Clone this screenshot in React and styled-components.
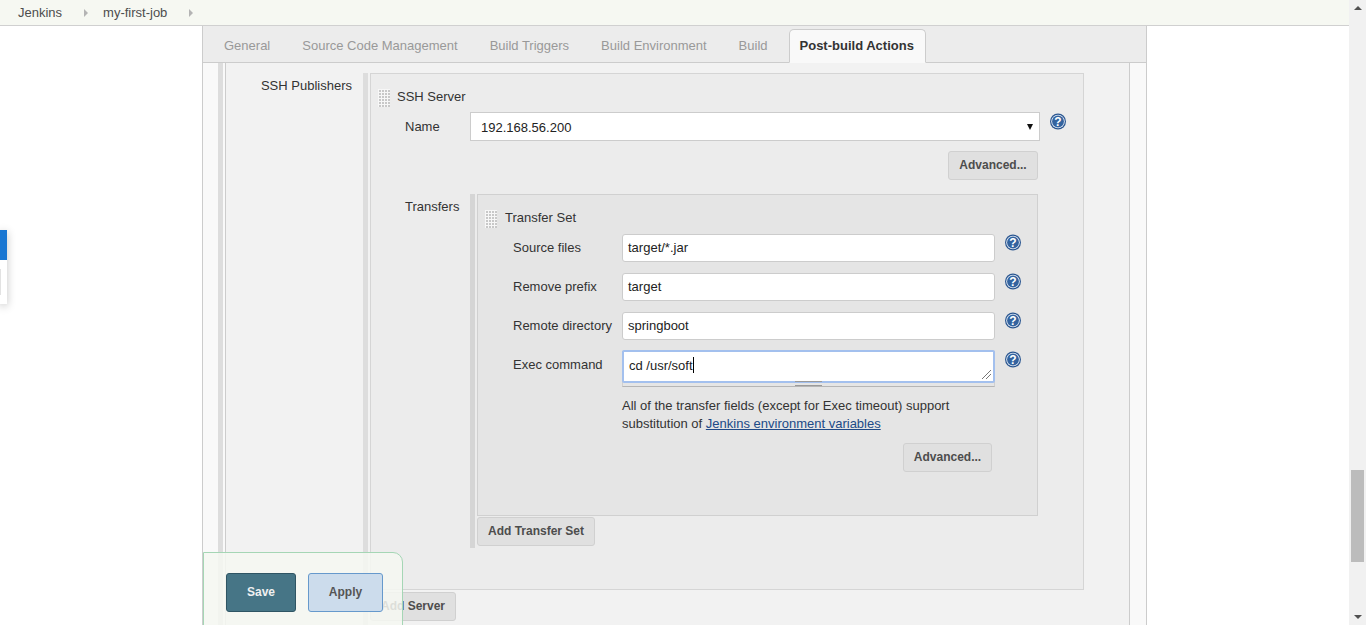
import React from "react";
import styled, { createGlobalStyle } from "styled-components";

const GlobalStyle = createGlobalStyle`
  html, body {
    margin: 0;
    padding: 0;
    height: 100%;
    overflow: hidden;
    background: #fff;
  }
  body {
    font-family: "Liberation Sans", Arial, Helvetica, sans-serif;
    font-size: 13px;
    color: #333;
  }
`;

const Viewport = styled.div`
  position: relative;
  display: flex;
  width: 1366px;
  height: 625px;
  overflow: hidden;
`;

const Main = styled.div`
  flex: 1;
  display: flex;
  flex-direction: column;
  min-width: 0;
`;

const Breadcrumbs = styled.div`
  display: flex;
  align-items: center;
  height: 25px;
  flex: none;
  background: #f6f8f2;
  border-bottom: 1px solid #d0d0d0;
  padding-left: 18px;
  color: #4d4d4d;
`;

const Crumb = styled.span`
  line-height: 25px;
`;

const CrumbArrow = styled.span`
  width: 0;
  height: 0;
  margin: 1px 15px 0 22px;
  border-left: 4px solid #b4b4b4;
  border-top: 4px solid transparent;
  border-bottom: 4px solid transparent;
`;

const Page = styled.div`
  flex: 1;
  width: 943px;
  margin-left: 202px;
  display: flex;
  flex-direction: column;
  border-left: 1px solid #ccc;
  border-right: 1px solid #ccc;
  min-height: 0;
`;

const TabBar = styled.div`
  display: flex;
  align-items: flex-end;
  flex: none;
  height: 36px;
  padding-left: 10px;
  background: #ececec;
  border-bottom: 1px solid #ccc;
`;

const Tab = styled.div`
  height: 32px;
  line-height: 31px;
  padding: 0 ${(p) => (p.$active ? 11 : 10)}px 0 10px;
  margin-right: 10px;
  margin-bottom: -1px;
  border: 1px solid ${(p) => (p.$active ? "#ccc" : "transparent")};
  border-bottom: 1px solid ${(p) => (p.$active ? "#f9f9f9" : "transparent")};
  border-radius: 5px 5px 0 0;
  background: ${(p) => (p.$active ? "#f9f9f9" : "transparent")};
  color: ${(p) => (p.$active ? "#333" : "#999")};
  font-weight: ${(p) => (p.$active ? 700 : 400)};
`;

const Body = styled.div`
  flex: 1;
  display: flex;
  background: #f9f9f9;
  padding: 0 17px 0 15px;
  min-height: 0;
`;

const Section = styled.div`
  flex: 1;
  display: grid;
  grid-template-columns: 140px 1fr;
  border-left: 5px solid #ddd;
  border-right: 1px solid #ccc;
  box-shadow: inset 2px 0 0 #f9f9f9, inset 3px 0 0 #ccc;
  background: #f2f2f2;
  padding-top: 10px;
  min-height: 0;
`;

const SectionLabel = styled.div`
  text-align: right;
  padding: 5px 11px 0 0;
  color: #333;
`;

const SectionContent = styled.div`
  display: flex;
  flex-direction: column;
  align-items: flex-start;
  border-left: 5px solid #ddd;
  padding-left: 2px;
  margin-right: 45px;
`;

const ServerPanel = styled.div`
  box-sizing: border-box;
  width: 714px;
  height: 517px;
  flex: none;
  padding-top: 15px;
  background: #ececec;
  border: 1px solid #d5d5d5;
`;

const Heading = styled.div`
  display: flex;
  align-items: flex-start;
  gap: ${(p) => p.$gap}px;
  height: 18px;
  line-height: 16px;
  padding-left: 7px;
  color: #333;
`;

const Handle = styled.span`
  width: 12px;
  height: 18px;
  flex: none;
  background-color: #c8c8c8;
  background-image:
    linear-gradient(to right, #f7f7f7 1px, transparent 1px),
    linear-gradient(to bottom, #f7f7f7 1px, transparent 1px);
  background-size: 3px 3px;
`;

const NameRow = styled.div`
  display: flex;
  align-items: flex-start;
  height: 29px;
  margin-top: 5px;
  padding-left: 34px;
`;

const RowLabel = styled.div`
  flex: none;
  width: ${(p) => p.$width}px;
  line-height: ${(p) => p.$line || 28}px;
`;

const SelectBox = styled.div`
  box-sizing: border-box;
  display: flex;
  justify-content: space-between;
  align-items: center;
  width: 570px;
  height: 29px;
  padding: 1px 6px 0 10px;
  background: #fff;
  border: 1px solid #ccc;
  color: #222;
`;

const SelectArrow = styled.span`
  width: 0;
  height: 0;
  border-top: 6px solid #111;
  border-left: 3px solid transparent;
  border-right: 3px solid transparent;
`;

const HelpSlot = styled.span`
  flex: none;
  display: block;
  width: 16px;
  height: 17px;
  margin: ${(p) => p.$top || 0}px 0 0 10px;
`;

const ButtonRow = styled.div`
  display: flex;
  justify-content: flex-end;
  margin-top: ${(p) => p.$top}px;
  padding-right: ${(p) => p.$right}px;
`;

const GreyButton = styled.div`
  box-sizing: border-box;
  display: inline-flex;
  align-items: center;
  justify-content: center;
  flex: none;
  width: ${(p) => p.$width}px;
  height: 29px;
  padding-bottom: 1px;
  background: #e0e0e0;
  border: 1px solid #d0d0d0;
  border-radius: 3px;
  color: #4d4d4d;
  font-size: 12px;
  font-weight: 700;
`;

const TransfersRow = styled.div`
  display: flex;
  margin-top: 14px;
  padding-left: 34px;
`;

const TransfersLabel = styled.div`
  width: 65px;
  flex: none;
  padding-top: 5px;
`;

const TransfersStack = styled.div`
  display: flex;
  flex-direction: column;
  align-items: flex-start;
  height: 354px;
  border-left: 5px solid #d5d5d5;
  padding-left: 2px;
`;

const TransferBox = styled.div`
  box-sizing: border-box;
  width: 561px;
  height: 322px;
  padding-top: 15px;
  margin-bottom: 1px;
  background: #e5e5e5;
  border: 1px solid #d0d0d0;
`;

const Fields = styled.div`
  display: flex;
  flex-direction: column;
  gap: 11px;
  margin-top: 6px;
  padding-left: 35px;
`;

const FieldRow = styled.div`
  display: flex;
  align-items: flex-start;
`;

const TextInput = styled.div`
  box-sizing: border-box;
  width: 373px;
  height: 28px;
  line-height: 26px;
  padding: 0 5px;
  background: #fff;
  border: 1px solid #ccc;
  border-radius: 3px;
  color: #222;
`;

const ExecBlock = styled.div`
  box-sizing: border-box;
  width: 373px;
  height: 36px;
  border-bottom: 1px solid #b5b5b5;
  border-left: 1px solid #d0d0d0;
  border-right: 1px solid #d0d0d0;
  position: relative;
`;

const ExecArea = styled.div`
  box-sizing: border-box;
  position: relative;
  margin: -1px -1px 0;
  height: 33px;
  padding: 0 5px;
  line-height: 27px;
  background: #fff;
  border: 2px solid #a3c0ee;
  border-radius: 2px;
  color: #222;
`;

const Caret = styled.span`
  display: inline-block;
  width: 1px;
  height: 16px;
  vertical-align: -3px;
  background: #000;
`;

const ResizeGrip = styled.svg`
  position: absolute;
  right: 1px;
  bottom: 1px;
`;

const DragBar = styled.span`
  position: absolute;
  left: 172px;
  bottom: 0;
  width: 27px;
  height: 3px;
  border-top: 1px solid #9a9a9a;
  border-bottom: 1px solid #9a9a9a;
  box-sizing: content-box;
`;

const Note = styled.div`
  margin: 10px 0 0 144px;
  width: 373px;
  line-height: 18px;
  color: #333;
`;

const NoteLink = styled.a`
  color: #204a87;
  text-decoration: underline;
`;

const SaveBar = styled.div`
  position: absolute;
  left: 203px;
  bottom: -1px;
  box-sizing: border-box;
  display: flex;
  gap: 12px;
  width: 200px;
  height: 74px;
  padding: 20px 0 0 22px;
  background: rgba(246, 248, 242, 0.85);
  border: 1px solid #a5d6b5;
  border-radius: 0 10px 0 0;
`;

const SaveButton = styled.div`
  box-sizing: border-box;
  display: flex;
  align-items: center;
  justify-content: center;
  width: ${(p) => p.$width}px;
  height: 39px;
  padding-bottom: 1px;
  border: 1px solid ${(p) => (p.$primary ? "#2f5564" : "#6699cc")};
  border-radius: 3px;
  background: ${(p) => (p.$primary ? "#467586" : "#ccdcec")};
  color: ${(p) => (p.$primary ? "#f0f0f0" : "#555")};
  font-size: 12px;
  font-weight: 700;
`;

const SideWidget = styled.div`
  position: absolute;
  left: 0;
  top: 230px;
  width: 7px;
  height: 74px;
  background: #fff;
  box-shadow: 0 2px 8px rgba(0, 0, 0, 0.25);
`;

const SideAccent = styled.div`
  height: 30px;
  background: #1976d2;
`;

const SideInput = styled.div`
  width: 0;
  height: 26px;
  margin-top: 9px;
  border-right: 1px solid #e2e2e2;
`;

const Scrollbar = styled.div`
  flex: none;
  display: flex;
  flex-direction: column;
  align-items: center;
  width: 17px;
  height: 625px;
  background: #f1f1f1;
`;

const ScrollEnd = styled.div`
  flex: none;
  width: 0;
  height: 0;
  margin: ${(p) => (p.$up ? "6px 0 0" : "0 0 6px")};
  border-left: 4px solid transparent;
  border-right: 4px solid transparent;
  border-bottom: ${(p) => (p.$up ? "4px solid #505050" : "none")};
  border-top: ${(p) => (p.$up ? "none" : "4px solid #505050")};
`;

const ScrollTrack = styled.div`
  flex: 1;
  width: 100%;
  padding: 460px 2px 0;
  box-sizing: border-box;
`;

const ScrollThumb = styled.div`
  height: 92px;
  background: #bcbcbc;
`;

const HelpIcon = ({ top }) => (
  <HelpSlot $top={top}>
    <svg width="16" height="17" viewBox="0 0 16 17">
      <circle cx="8" cy="8.5" r="8" fill="#2a5690" />
      <circle cx="8" cy="8.5" r="6.8" fill="#e6edf7" />
      <circle cx="8" cy="8.5" r="5.9" fill="#33639f" />
      <text x="8" y="12.7" textAnchor="middle" fontSize="12" fontWeight="700" fill="#fff" fontFamily="Liberation Sans, sans-serif">?</text>
    </svg>
  </HelpSlot>
);

const fields = [
  ["Source files", "target/*.jar"],
  ["Remove prefix", "target"],
  ["Remote directory", "springboot"],
];

const tabs = ["General", "Source Code Management", "Build Triggers", "Build Environment", "Build"];

export default function App() {
  return (
    <Viewport>
      <GlobalStyle />
      <Main>
        <Breadcrumbs>
          <Crumb>Jenkins</Crumb>
          <CrumbArrow />
          <Crumb>my-first-job</Crumb>
          <CrumbArrow />
        </Breadcrumbs>
        <Page>
          <TabBar>
            {tabs.map((t) => (
              <Tab key={t}>{t}</Tab>
            ))}
            <Tab $active>Post-build Actions</Tab>
          </TabBar>
          <Body>
            <Section>
              <SectionLabel>SSH Publishers</SectionLabel>
              <SectionContent>
                <ServerPanel>
                  <Heading $gap={7}>
                    <Handle />
                    SSH Server
                  </Heading>
                  <NameRow>
                    <RowLabel $width={65} $line={30}>Name</RowLabel>
                    <SelectBox>
                      192.168.56.200
                      <SelectArrow />
                    </SelectBox>
                    <HelpIcon top={1} />
                  </NameRow>
                  <ButtonRow $top={10} $right={45}>
                    <GreyButton $width={90}>Advanced...</GreyButton>
                  </ButtonRow>
                  <TransfersRow>
                    <TransfersLabel>Transfers</TransfersLabel>
                    <TransfersStack>
                      <TransferBox>
                        <Heading $gap={8}>
                          <Handle />
                          Transfer Set
                        </Heading>
                        <Fields>
                          {fields.map(([label, value]) => (
                            <FieldRow key={label}>
                              <RowLabel $width={109}>{label}</RowLabel>
                              <TextInput>{value}</TextInput>
                              <HelpIcon />
                            </FieldRow>
                          ))}
                          <FieldRow>
                            <RowLabel $width={109}>Exec command</RowLabel>
                            <ExecBlock>
                              <ExecArea>
                                cd /usr/soft
                                <Caret />
                                <ResizeGrip width="11" height="11" viewBox="0 0 11 11">
                                  <path d="M1 10 L10 1 M5 10 L10 5" stroke="#777" strokeWidth="1" fill="none" />
                                </ResizeGrip>
                              </ExecArea>
                              <DragBar />
                            </ExecBlock>
                            <HelpIcon />
                          </FieldRow>
                        </Fields>
                        <Note>
                          All of the transfer fields (except for Exec timeout) support substitution of{" "}
                          <NoteLink>Jenkins environment variables</NoteLink>
                        </Note>
                        <ButtonRow $top={10} $right={45}>
                          <GreyButton $width={89}>Advanced...</GreyButton>
                        </ButtonRow>
                      </TransferBox>
                      <GreyButton $width={118}>Add Transfer Set</GreyButton>
                    </TransfersStack>
                  </TransfersRow>
                </ServerPanel>
                <ButtonRow $top={2} $right={0}>
                  <GreyButton $width={86}>Add Server</GreyButton>
                </ButtonRow>
              </SectionContent>
            </Section>
          </Body>
        </Page>
      </Main>
      <Scrollbar>
        <ScrollEnd $up />
        <ScrollTrack>
          <ScrollThumb />
        </ScrollTrack>
        <ScrollEnd />
      </Scrollbar>
      <SaveBar>
        <SaveButton $primary $width={70}>Save</SaveButton>
        <SaveButton $width={75}>Apply</SaveButton>
      </SaveBar>
      <SideWidget>
        <SideAccent />
        <SideInput />
      </SideWidget>
    </Viewport>
  );
}
